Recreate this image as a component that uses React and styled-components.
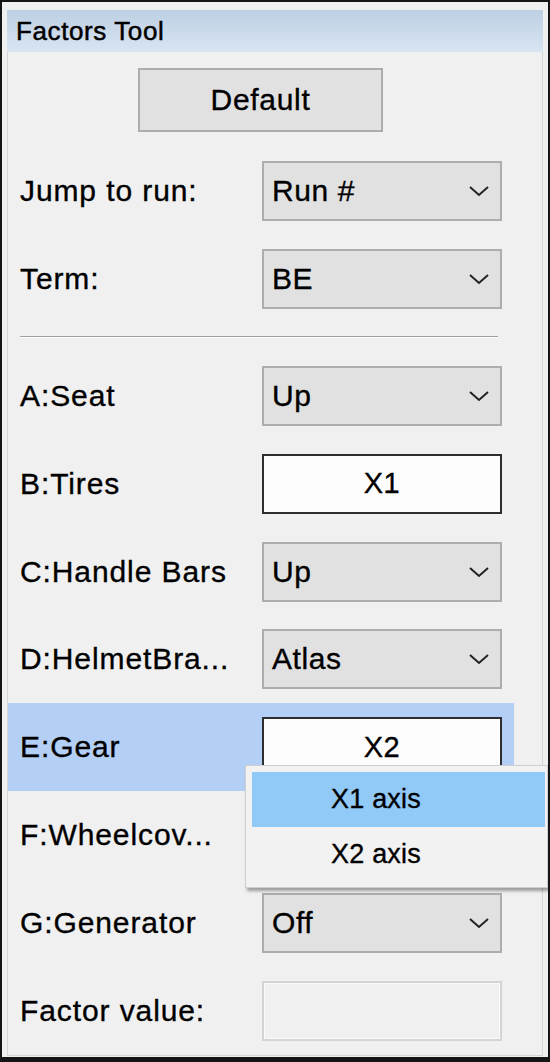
import React from "react";
import styled, { createGlobalStyle } from "styled-components";

const GlobalStyle = createGlobalStyle`
  html, body { margin: 0; padding: 0; background: #f0f0f0; }
  * { box-sizing: border-box; }
`;

const Window = styled.div`
  width: 550px;
  height: 1062px;
  border: 2px solid #151515;
  border-bottom-width: 5px;
  background: #f0f0f0;
  padding: 8px 5px 0 5px;
  font-family: "Liberation Sans", Arial, sans-serif;
  color: #000;
  overflow: hidden;
  -webkit-text-stroke: 0.35px #000;
`;

const TitleBar = styled.div`
  height: 42px;
  display: flex;
  align-items: center;
  padding-left: 9px;
  font-size: 26px;
  letter-spacing: 0.6px;
  -webkit-text-stroke: 0.5px #000;
  background: linear-gradient(#bdcfe2, #d8e5f3);
`;

const Panel = styled.div`
  height: 1004px;
  border: 1px solid #d6d6d6;
  border-top: none;
  display: flex;
  flex-direction: column;
  align-items: flex-start;
`;

const DefaultButton = styled.div`
  margin: 16px 0 15px 130px;
  width: 245px;
  height: 64px;
  border: 2px solid #adadad;
  background: #e1e1e1;
  display: flex;
  align-items: center;
  justify-content: center;
  font-size: 30px;
  letter-spacing: 0.7px;
`;

const Row = styled.div`
  position: relative;
  width: 506px;
  height: 88px;
  display: grid;
  grid-template-columns: 254px 240px;
  align-items: center;
  background: ${(p) => (p.$selected ? "#b4cff5" : "transparent")};
`;

const Label = styled.div`
  padding-left: 12px;
  font-size: 30px;
  letter-spacing: 0.9px;
  white-space: nowrap;
`;

const Combo = styled.div`
  height: 60px;
  border: 2px solid #adadad;
  background: #e1e1e1;
  display: flex;
  align-items: center;
  justify-content: space-between;
  padding: 0 10px 0 8px;
  font-size: 30px;
  letter-spacing: 0.6px;
`;

const ToggleButton = styled.div`
  height: 60px;
  border: 2px solid #2e2e2e;
  background: #fdfdfd;
  display: flex;
  align-items: center;
  justify-content: center;
  font-size: 29px;
  letter-spacing: 0.5px;
`;

const TextBox = styled.div`
  height: 60px;
  border: 2px solid #d4d4d4;
  background: #f0f0f0;
  box-shadow: inset 0 0 0 1px #fafafa;
`;

const Separator = styled.div`
  margin: 13px 0 14px 12px;
  width: 478px;
  height: 2px;
  background: #a0a0a0;
  border-bottom: 1px solid #ffffff;
`;

const Popup = styled.div`
  position: absolute;
  left: 237px;
  top: 62px;
  width: 303px;
  height: 123px;
  background: #f2f2f2;
  border: 1px solid #cfcfcf;
  box-shadow: 2px 3px 3px rgba(0, 0, 0, 0.35);
  padding: 6px 2px 6px 6px;
  z-index: 10;
  display: flex;
  flex-direction: column;
`;

const PopupItem = styled.div`
  height: 55px;
  display: flex;
  align-items: center;
  padding-left: 79px;
  font-size: 27px;
  letter-spacing: 0.2px;
  background: ${(p) => (p.$active ? "#91c9f7" : "transparent")};
`;

const Chevron = () => (
  <svg width="22" height="12" viewBox="0 0 22 12">
    <polyline
      points="2,2 11,10 20,2"
      fill="none"
      stroke="#222"
      strokeWidth="2"
    />
  </svg>
);

const ComboField = ({ value }) => (
  <Combo>
    <span>{value}</span>
    <Chevron />
  </Combo>
);

export default function App() {
  return (
    <>
      <GlobalStyle />
      <Window>
        <TitleBar>Factors Tool</TitleBar>
        <Panel>
          <DefaultButton>Default</DefaultButton>
          <Row>
            <Label>Jump to run:</Label>
            <ComboField value="Run #" />
          </Row>
          <Row>
            <Label>Term:</Label>
            <ComboField value="BE" />
          </Row>
          <Separator />
          <Row>
            <Label>A:Seat</Label>
            <ComboField value="Up" />
          </Row>
          <Row>
            <Label>B:Tires</Label>
            <ToggleButton>X1</ToggleButton>
          </Row>
          <Row>
            <Label>C:Handle Bars</Label>
            <ComboField value="Up" />
          </Row>
          <Row>
            <Label>D:HelmetBra...</Label>
            <ComboField value="Atlas" />
          </Row>
          <Row $selected>
            <Label>E:Gear</Label>
            <ToggleButton>X2</ToggleButton>
            <Popup>
              <PopupItem $active>X1 axis</PopupItem>
              <PopupItem>X2 axis</PopupItem>
            </Popup>
          </Row>
          <Row>
            <Label>F:Wheelcov...</Label>
            <ComboField value="" />
          </Row>
          <Row>
            <Label>G:Generator</Label>
            <ComboField value="Off" />
          </Row>
          <Row>
            <Label>Factor value:</Label>
            <TextBox />
          </Row>
        </Panel>
      </Window>
    </>
  );
}
